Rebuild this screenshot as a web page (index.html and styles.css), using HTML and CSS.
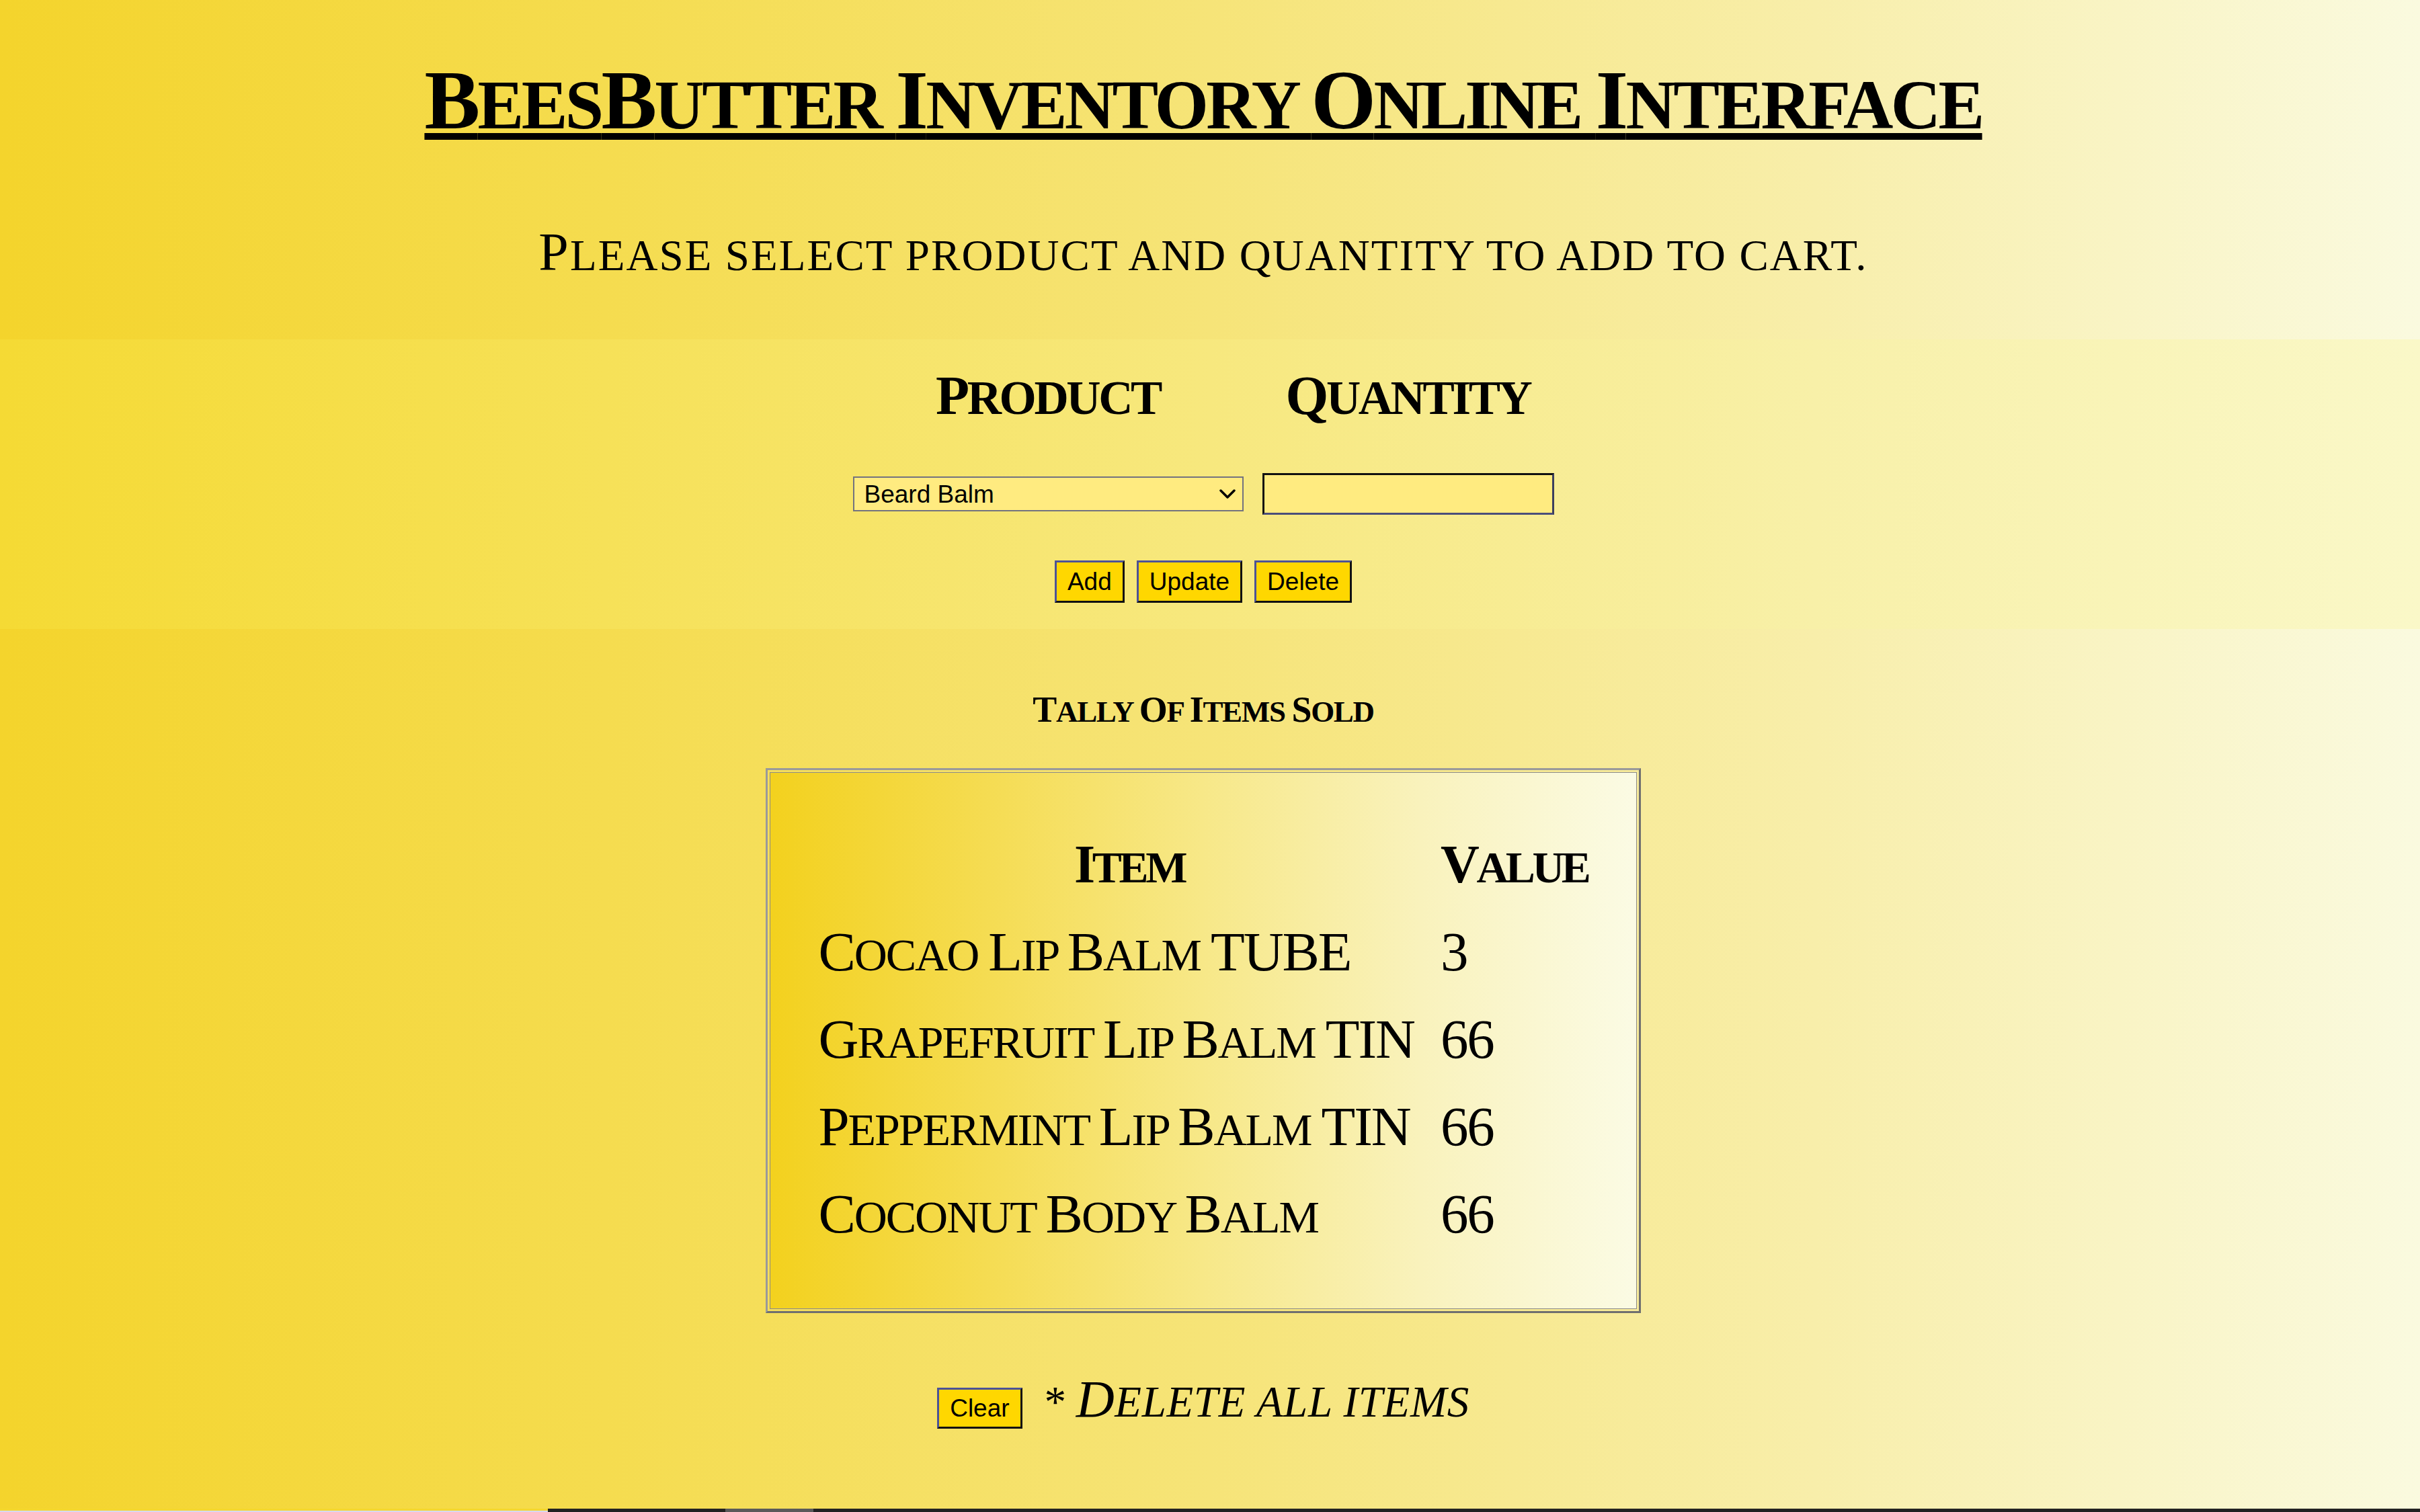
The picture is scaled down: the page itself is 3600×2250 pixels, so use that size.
FILE: index.html
```html
<!DOCTYPE html>
<html lang="en">
<head>
<meta charset="utf-8">
<title>BeesButter Inventory Online Interface</title>
<link rel="stylesheet" href="styles.css">
</head>
<body>
<div class="page">
  <header class="band band-top">
    <h1 class="title"><span class="c">B</span>ees<span class="c">B</span>utter <span class="c">I</span>nventory <span class="c">O</span>nline <span class="c">I</span>nterface</h1>
    <p class="lead"><span class="c">P</span>lease select product and quantity to add to cart.</p>
  </header>

  <section class="band band-form">
    <div class="form-grid">
      <h2 class="col-head"><span class="c">P</span>roduct</h2>
      <h2 class="col-head"><span class="c">Q</span>uantity</h2>
      <div class="select-wrap">
        <select class="product">
          <option>Beard Balm</option>
        </select>
        <svg class="chev" width="24" height="14" viewBox="0 0 24 14" aria-hidden="true">
          <path d="M2 2 L12 12 L22 2" fill="none" stroke="#000" stroke-width="3.5" stroke-linecap="round" stroke-linejoin="round"/>
        </svg>
      </div>
      <input class="qty" type="text">
    </div>
    <div class="actions">
      <button class="btn" type="button">Add</button>
      <button class="btn" type="button">Update</button>
      <button class="btn" type="button">Delete</button>
    </div>
  </section>

  <main class="band band-tally">
    <h3 class="tally-title"><span class="c">T</span>ally <span class="c">O</span>f <span class="c">I</span>tems <span class="c">S</span>old</h3>
    <div class="tally-box">
      <div class="tally-inner">
        <table class="tally">
          <thead>
            <tr>
              <th class="col-item"><span class="c">I</span>tem</th>
              <th class="col-val"><span class="c">V</span>alue</th>
            </tr>
          </thead>
          <tbody>
            <tr><td class="col-item"><span class="c">C</span>ocao <span class="c">L</span>ip <span class="c">B</span>alm <span class="c">TUBE</span></td><td class="col-val"><span class="c">3</span></td></tr>
            <tr><td class="col-item"><span class="c">G</span>rapefruit <span class="c">L</span>ip <span class="c">B</span>alm <span class="c">TIN</span></td><td class="col-val"><span class="c">66</span></td></tr>
            <tr><td class="col-item"><span class="c">P</span>eppermint <span class="c">L</span>ip <span class="c">B</span>alm <span class="c">TIN</span></td><td class="col-val"><span class="c">66</span></td></tr>
            <tr><td class="col-item"><span class="c">C</span>oconut <span class="c">B</span>ody <span class="c">B</span>alm</td><td class="col-val"><span class="c">66</span></td></tr>
          </tbody>
        </table>
      </div>
    </div>
    <div class="clear-row">
      <button class="btn btn-clear" type="button">Clear</button>
      <span class="note">* <span class="c">D</span>elete all items</span>
    </div>
  </main>

  <div class="bottom-strip">
    <div class="strip-left"></div>
    <div class="strip-right"></div>
  </div>
</div>
</body>
</html>
```

FILE: styles.css
```css
html, body {
  margin: 0;
  padding: 0;
  overflow: hidden;
}

body {
  width: 3600px;
  height: 2250px;
  color: #000;
  font-family: "Liberation Serif", "Times New Roman", serif;
  background: #f6e47e;
}

.page {
  display: flex;
  flex-direction: column;
  width: 3600px;
  height: 2250px;
}

.band {
  box-sizing: border-box;
  padding-right: 20px;
  display: flex;
  flex-direction: column;
  align-items: center;
}

.c {
  text-transform: uppercase;
}

/* ---------- header band ---------- */
.band-top {
  height: 505px;
  padding-top: 85px;
  background: linear-gradient(to right, #f4d42c 0%, #f5dc4f 25%, #f6e478 50%, #f8eeaa 75%, #fafadf 100%);
}

.title {
  margin: 0;
  font-size: 103px;
  line-height: 130px;
  font-weight: 700;
  text-transform: uppercase;
  letter-spacing: -0.035em;
  text-decoration: underline;
  text-decoration-thickness: 10px;
  text-underline-offset: 7px;
  white-space: nowrap;
}

.title .c {
  font-size: 124px;
}

.lead {
  margin: 109px 0 0;
  font-size: 65px;
  line-height: 90px;
  font-weight: 400;
  text-transform: uppercase;
  letter-spacing: 0.032em;
  white-space: nowrap;
}

.lead .c {
  font-size: 80px;
}

/* ---------- form band ---------- */
.band-form {
  height: 431px;
  padding-top: 39px;
  background: linear-gradient(to right, #f5da34 0%, #f6e158 25%, #f7e87e 50%, #f8f0a8 75%, #faf8c8 100%);
}

.form-grid {
  display: grid;
  grid-template-columns: 581px 434px;
  column-gap: 28px;
  row-gap: 67px;
  align-items: center;
}

.col-head {
  margin: 0;
  text-align: center;
  font-size: 71px;
  line-height: 90px;
  font-weight: 700;
  text-transform: uppercase;
  letter-spacing: -0.048em;
}

.col-head .c {
  font-size: 82px;
}

.select-wrap {
  position: relative;
  height: 52px;
}

.product {
  appearance: none;
  -webkit-appearance: none;
  box-sizing: border-box;
  width: 581px;
  height: 52px;
  margin: 0;
  padding: 0 50px 0 15px;
  border: 2px solid #73737f;
  border-radius: 0;
  background: #ffeb80;
  color: #000;
  font-family: "Liberation Sans", Arial, sans-serif;
  font-size: 37px;
}

.chev {
  position: absolute;
  right: 12px;
  top: 19px;
}

.qty {
  box-sizing: border-box;
  width: 434px;
  height: 62px;
  margin: 0;
  padding: 0 10px;
  border-style: solid;
  border-width: 3px;
  border-color: #111 #3c3f5e #4a4f7a #111;
  background: #ffeb80;
  font-family: "Liberation Sans", Arial, sans-serif;
  font-size: 37px;
}

.actions {
  display: flex;
  gap: 18px;
  margin-top: 68px;
}

.btn {
  box-sizing: border-box;
  height: 63px;
  margin: 0;
  padding: 0 16px;
  border-style: solid;
  border-width: 3px;
  border-color: #4d5396 #111 #111 #4d5396;
  border-radius: 0;
  background: #ffd700;
  color: #000;
  font-family: "Liberation Sans", Arial, sans-serif;
  font-size: 37px;
  line-height: 1;
}

/* ---------- tally band ---------- */
.band-tally {
  flex: 1;
  padding-top: 90px;
  background: linear-gradient(to right, #f4d42c 0%, #f5dc4f 25%, #f6e478 50%, #f8eeaa 75%, #fafadf 100%);
}

.tally-title {
  margin: 0;
  font-size: 45px;
  line-height: 60px;
  font-weight: 700;
  text-transform: uppercase;
  letter-spacing: -0.03em;
}

.tally-title .c {
  font-size: 54px;
}

.tally-box {
  box-sizing: border-box;
  width: 1302px;
  margin-top: 54px;
  padding: 3px;
  border-style: solid;
  border-width: 3px;
  border-color: #9a9a9a #6f6f6f #6f6f6f #9a9a9a;
}

.tally-inner {
  box-sizing: border-box;
  height: 799px;
  padding-top: 73px;
  border: 1px solid #8a8a8a;
  background: linear-gradient(to right, #f3d11e 0%, #f5dc52 25%, #f7e888 50%, #f9f2bc 75%, #fbfbe4 100%);
}

.tally {
  margin: 0 auto;
  border-collapse: collapse;
}

.tally th,
.tally td {
  height: 130px;
  padding: 0;
  vertical-align: middle;
  line-height: 100px;
  white-space: nowrap;
  text-transform: uppercase;
}

.tally th {
  font-size: 66px;
  font-weight: 700;
  text-align: center;
  letter-spacing: -0.065em;
}

.tally th .c {
  font-size: 80px;
}

.tally td {
  font-size: 68px;
  font-weight: 400;
  text-align: left;
  letter-spacing: -0.03em;
}

.tally td .c {
  font-size: 83px;
}

.tally td.col-item {
  padding-right: 39px;
}

/* ---------- clear row ---------- */
.clear-row {
  display: flex;
  align-items: baseline;
  margin-top: 98px;
}

.btn-clear {
  height: 61px;
}

.note {
  margin-left: 30px;
  font-size: 65px;
  line-height: 60px;
  font-style: italic;
  text-transform: uppercase;
  letter-spacing: 0.01em;
}

.note .c {
  font-size: 79px;
}

/* ---------- bottom strip ---------- */
.bottom-strip {
  display: flex;
  height: 5px;
  flex: none;
}

.strip-left {
  width: 815px;
  background: linear-gradient(to bottom, #f4d730 0, #f4d730 3px, #d8d8ee 3px);
}

.strip-right {
  flex: 1;
  background: linear-gradient(to right, #222 0, #222 264px, #5a5a5a 264px, #5a5a5a 395px, #222 395px);
}
```
